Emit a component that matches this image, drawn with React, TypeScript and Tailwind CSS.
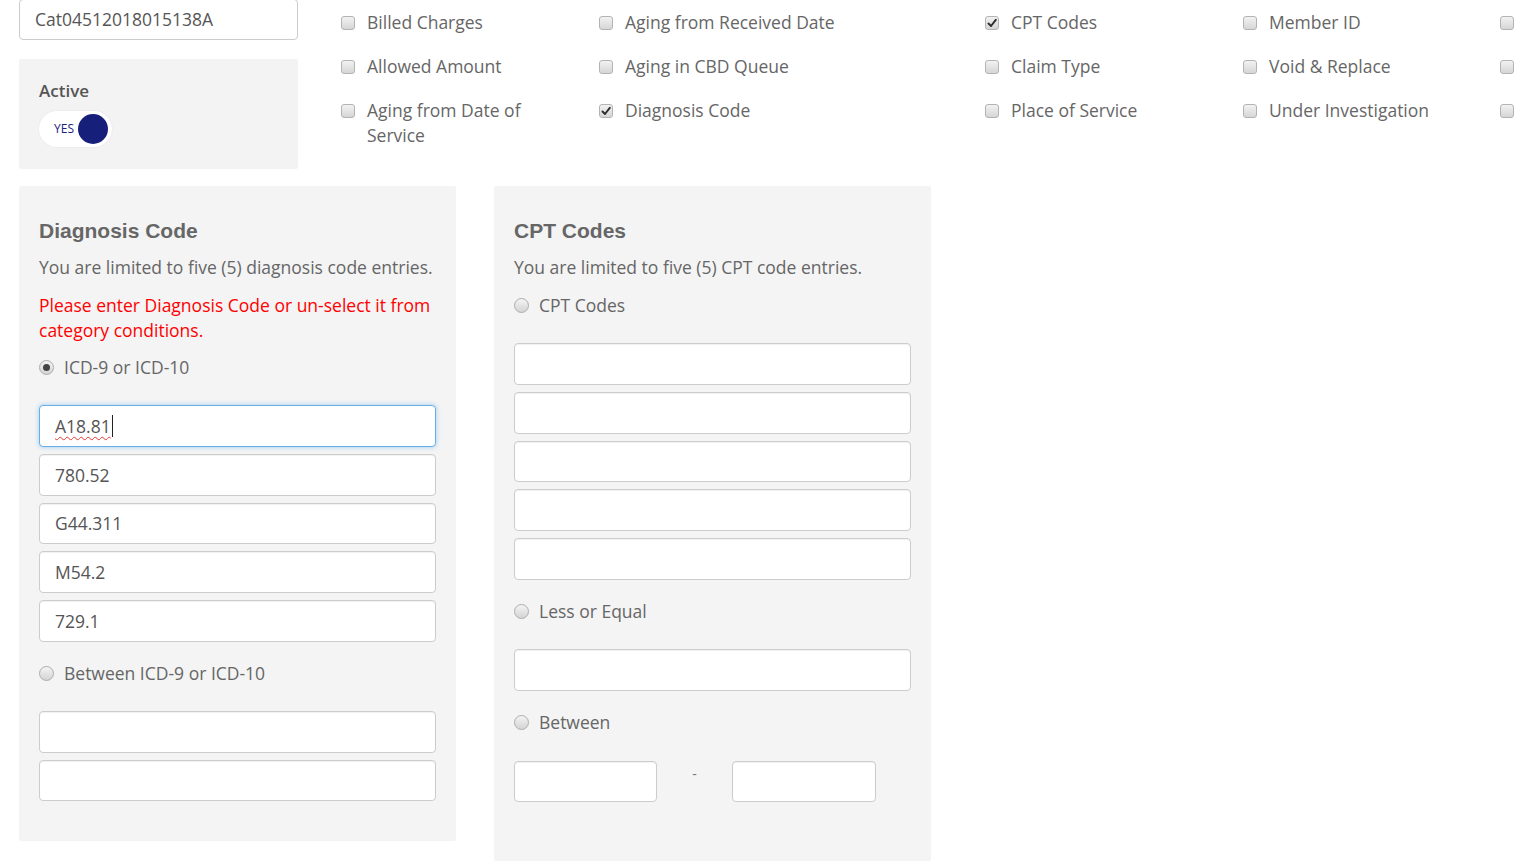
import React from 'react';

const sans = "font-['Open_Sans',sans-serif]";

function Checkbox({ checked = false }: { checked?: boolean }) {
  return (
    <span className="mt-[6px] flex h-[14px] w-[14px] shrink-0 items-center justify-center rounded-[3px] border border-[#b3b3b3] bg-linear-to-b from-[#f2f2f2] to-[#d6d6d6]">
      {checked && (
        <svg width="10" height="10" viewBox="0 0 10 10">
          <path d="M1.5 5.5 L4 8 L8.8 1.8" fill="none" stroke="#2d2d2d" strokeWidth="1.9" strokeLinecap="round" strokeLinejoin="round" />
        </svg>
      )}
    </span>
  );
}

function Radio({ checked = false, label }: { checked?: boolean; label: string }) {
  return (
    <div className="flex h-[25px] items-center gap-[10px] text-[17.5px] leading-[25px] text-[#666]">
      <span className="flex h-[15px] w-[15px] items-center justify-center rounded-full border border-[#adadad] bg-linear-to-b from-[#f4f4f4] to-[#d4d4d4]">
        {checked && <span className="h-[7px] w-[7px] rounded-full bg-[#444]" />}
      </span>
      {label}
    </div>
  );
}

function Field({ value = '', focused = false, className = '' }: { value?: string; focused?: boolean; className?: string }) {
  return (
    <div
      className={`flex h-[41.75px] items-center rounded-[4px] border bg-white px-[15px] text-[17.5px] text-[#555] ${
        focused
          ? 'border-[#66afe9] shadow-[0_0_5px_rgba(102,175,233,0.6)]'
          : 'border-[#ccc] shadow-[inset_0_1px_1px_rgba(0,0,0,0.06)]'
      } ${className}`}
    >
      {focused ? (
        <span className="flex items-center">
          <span className="underline decoration-[#e53935] decoration-wavy decoration-1 underline-offset-[3px]">{value}</span>
          <span className="ml-px h-[22px] w-px bg-[#222]" />
        </span>
      ) : (
        value
      )}
    </div>
  );
}

const columns: { width: string; items: { label: string; checked?: boolean }[] }[] = [
  {
    width: 'w-[258px]',
    items: [{ label: 'Billed Charges' }, { label: 'Allowed Amount' }, { label: 'Aging from Date of Service' }],
  },
  {
    width: 'w-[386px]',
    items: [{ label: 'Aging from Received Date' }, { label: 'Aging in CBD Queue' }, { label: 'Diagnosis Code', checked: true }],
  },
  {
    width: 'w-[258px]',
    items: [{ label: 'CPT Codes', checked: true }, { label: 'Claim Type' }, { label: 'Place of Service' }],
  },
  {
    width: 'w-[257px]',
    items: [{ label: 'Member ID' }, { label: 'Void & Replace' }, { label: 'Under Investigation' }],
  },
];

export default function App() {
  return (
    <div className={`h-[862px] w-[1527px] overflow-hidden bg-white ${sans}`}>
      <div className="flex flex-col px-[19px]">
        {/* top: search + category conditions */}
        <div className="flex">
          <div className="flex w-[279px] shrink-0 flex-col">
            <div className="-mt-px flex h-[41px] items-center rounded-[4px] border border-[#ccc] bg-white px-[15px] text-[17.5px] text-[#555]">
              Cat04512018015138A
            </div>
            <div className="mt-[19px] flex h-[109px] flex-col rounded-[2px] bg-[#f3f3f3] px-[20px] pt-[20px] shadow-[0_1px_1px_rgba(0,0,0,0.05)]">
              <span className="text-[17px] font-semibold leading-[24px] text-[#555]">Active</span>
              <div className="mt-[8px] flex h-[36px] w-[73px] items-center justify-end gap-[4px] rounded-full bg-white pr-[4px] shadow-[0_0_2px_rgba(0,0,0,0.08)]">
                <span className="text-[12px] text-[#1a237e]">YES</span>
                <span className="h-[30px] w-[30px] rounded-full bg-[#16207a]" />
              </div>
            </div>
          </div>

          <div className="ml-[43px] flex pt-[10px]">
            {columns.map((col, i) => (
              <div key={i} className={`${col.width} flex shrink-0 flex-col gap-[19px] pr-[30px]`}>
                {col.items.map((it) => (
                  <div key={it.label} className="flex gap-[12px] text-[17.5px] leading-[25px] text-[#666]">
                    <Checkbox checked={it.checked} />
                    <span>{it.label}</span>
                  </div>
                ))}
              </div>
            ))}
            {/* last column runs past the window edge */}
            <div className="flex w-[20px] shrink-0 flex-col gap-[19px]">
              <div className="flex h-[25px]"><Checkbox /></div>
              <div className="flex h-[25px]"><Checkbox /></div>
              <div className="flex h-[25px]"><Checkbox /></div>
            </div>
          </div>
        </div>

        {/* panels */}
        <div className="mt-[18px] flex items-start gap-[38px]">
          {/* Diagnosis Code */}
          <div className="flex w-[437px] flex-col rounded-[2px] bg-[#f4f4f4] px-[20px] pb-[39px] pt-[33px] shadow-[0_1px_1px_rgba(0,0,0,0.05)]">
            <h2 className="font-['Liberation_Sans',Arial,sans-serif] text-[21px] font-bold leading-[24px] text-[#666]">Diagnosis Code</h2>
            <p className="mt-[12px] whitespace-nowrap text-[17.5px] leading-[25px] text-[#666]">You are limited to five (5) diagnosis code entries.</p>
            <p className="mt-[13px] text-[17.5px] leading-[25px] text-[#ff0000]">
              Please enter Diagnosis Code or un-select it from category conditions.
            </p>
            <div className="mt-[12px]">
              <Radio checked label="ICD-9 or ICD-10" />
            </div>
            <div className="mt-[25px] flex flex-col gap-[7px]">
              <Field value="A18.81" focused />
              <Field value="780.52" />
              <Field value="G44.311" />
              <Field value="M54.2" />
              <Field value="729.1" />
            </div>
            <div className="mt-[19px]">
              <Radio label="Between ICD-9 or ICD-10" />
            </div>
            <div className="mt-[25px] flex flex-col gap-[7px]">
              <Field />
              <Field />
            </div>
          </div>

          {/* CPT Codes */}
          <div className="flex w-[437px] flex-col rounded-[2px] bg-[#f4f4f4] px-[20px] pb-[58px] pt-[33px] shadow-[0_1px_1px_rgba(0,0,0,0.05)]">
            <h2 className="font-['Liberation_Sans',Arial,sans-serif] text-[21px] font-bold leading-[24px] text-[#666]">CPT Codes</h2>
            <p className="mt-[12px] text-[17.5px] leading-[25px] text-[#666]">You are limited to five (5) CPT code entries.</p>
            <div className="mt-[13px]">
              <Radio label="CPT Codes" />
            </div>
            <div className="mt-[25px] flex flex-col gap-[7px]">
              <Field />
              <Field />
              <Field />
              <Field />
              <Field />
            </div>
            <div className="mt-[19px]">
              <Radio label="Less or Equal" />
            </div>
            <div className="mt-[25px]">
              <Field />
            </div>
            <div className="mt-[19px]">
              <Radio label="Between" />
            </div>
            <div className="mt-[26px] flex items-center">
              <Field className="w-[143px]" />
              <span className="w-[75px] pb-[16px] text-center text-[14px] text-[#777]">-</span>
              <Field className="w-[144px]" />
            </div>
          </div>
        </div>
      </div>
    </div>
  );
}
